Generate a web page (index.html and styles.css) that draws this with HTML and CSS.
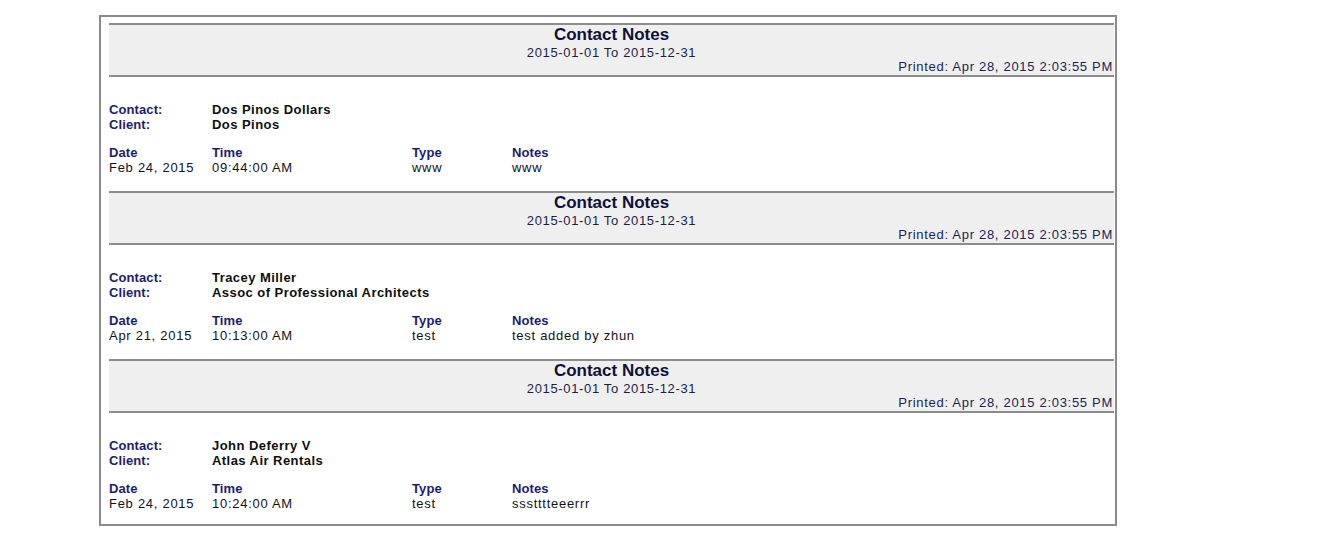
FILE: index.html
```html
<!DOCTYPE html>
<html>
<head>
<meta charset="utf-8">
<link rel="stylesheet" href="styles.css">
</head>
<body>
<div class="report">
  <section class="sheet">
    <header class="band">
      <div class="title">Contact Notes</div>
      <div class="range">2015-01-01 To 2015-12-31</div>
      <div class="printed">Printed: Apr 28, 2015 2:03:55 PM</div>
    </header>
    <div class="who">
      <span class="label">Contact:</span><span class="name">Dos Pinos Dollars</span>
      <span class="label">Client:</span><span class="name">Dos Pinos</span>
    </div>
    <div class="rows">
      <span class="label">Date</span><span class="label">Time</span><span class="label">Type</span><span class="label">Notes</span>
      <span class="val">Feb 24, 2015</span><span class="val">09:44:00 AM</span><span class="val">www</span><span class="val">www</span>
    </div>
  </section>
  <section class="sheet">
    <header class="band">
      <div class="title">Contact Notes</div>
      <div class="range">2015-01-01 To 2015-12-31</div>
      <div class="printed">Printed: Apr 28, 2015 2:03:55 PM</div>
    </header>
    <div class="who">
      <span class="label">Contact:</span><span class="name">Tracey Miller</span>
      <span class="label">Client:</span><span class="name">Assoc of Professional Architects</span>
    </div>
    <div class="rows">
      <span class="label">Date</span><span class="label">Time</span><span class="label">Type</span><span class="label">Notes</span>
      <span class="val">Apr 21, 2015</span><span class="val">10:13:00 AM</span><span class="val">test</span><span class="val">test added by zhun</span>
    </div>
  </section>
  <section class="sheet">
    <header class="band">
      <div class="title">Contact Notes</div>
      <div class="range">2015-01-01 To 2015-12-31</div>
      <div class="printed">Printed: Apr 28, 2015 2:03:55 PM</div>
    </header>
    <div class="who">
      <span class="label">Contact:</span><span class="name">John Deferry V</span>
      <span class="label">Client:</span><span class="name">Atlas Air Rentals</span>
    </div>
    <div class="rows">
      <span class="label">Date</span><span class="label">Time</span><span class="label">Type</span><span class="label">Notes</span>
      <span class="val">Feb 24, 2015</span><span class="val">10:24:00 AM</span><span class="val">test</span><span class="val">ssstttteeerrr</span>
    </div>
  </section>
</div>
</body>
</html>
```

FILE: styles.css
```css
html, body {
  margin: 0;
  padding: 0;
  background: #ffffff;
}
body {
  font-family: "Liberation Sans", Arial, Helvetica, sans-serif;
  color: #111111;
}
.report {
  box-sizing: border-box;
  margin: 15px 0 0 99px;
  width: 1018px;
  border: 2px solid #8a8a8a;
  padding: 6px 1px 13px 8px;
}
.sheet {
  margin-bottom: 16px;
}
.sheet:last-child {
  margin-bottom: 0;
}
.band {
  background: #efefef;
  border-top: 2px solid #8c8c8c;
  border-bottom: 2px solid #8c8c8c;
  height: 50px;
  box-sizing: content-box;
  display: flex;
  flex-direction: column;
}
.title {
  font-weight: bold;
  font-size: 17px;
  line-height: 20px;
  text-align: center;
  color: #10103a;
}
.range {
  font-size: 13px;
  line-height: 16px;
  letter-spacing: 0.65px;
  text-align: center;
  color: #1c1c4a;
}
.printed {
  font-size: 13px;
  line-height: 12px;
  letter-spacing: 0.7px;
  text-align: right;
  color: #1e1e5a;
  padding-right: 1px;
}
.who {
  margin-top: 25px;
  display: grid;
  grid-template-columns: 103px 1fr;
  line-height: 15px;
}
.rows {
  margin-top: 13px;
  display: grid;
  grid-template-columns: 103px 200px 100px 1fr;
  line-height: 15px;
}
.label {
  font-weight: bold;
  font-size: 13px;
  letter-spacing: 0.1px;
  color: #1c1c72;
}
.name {
  font-weight: bold;
  font-size: 13px;
  letter-spacing: 0.45px;
  color: #0e0e0e;
}
.val {
  font-size: 13px;
  letter-spacing: 0.72px;
  color: #121218;
}
```
